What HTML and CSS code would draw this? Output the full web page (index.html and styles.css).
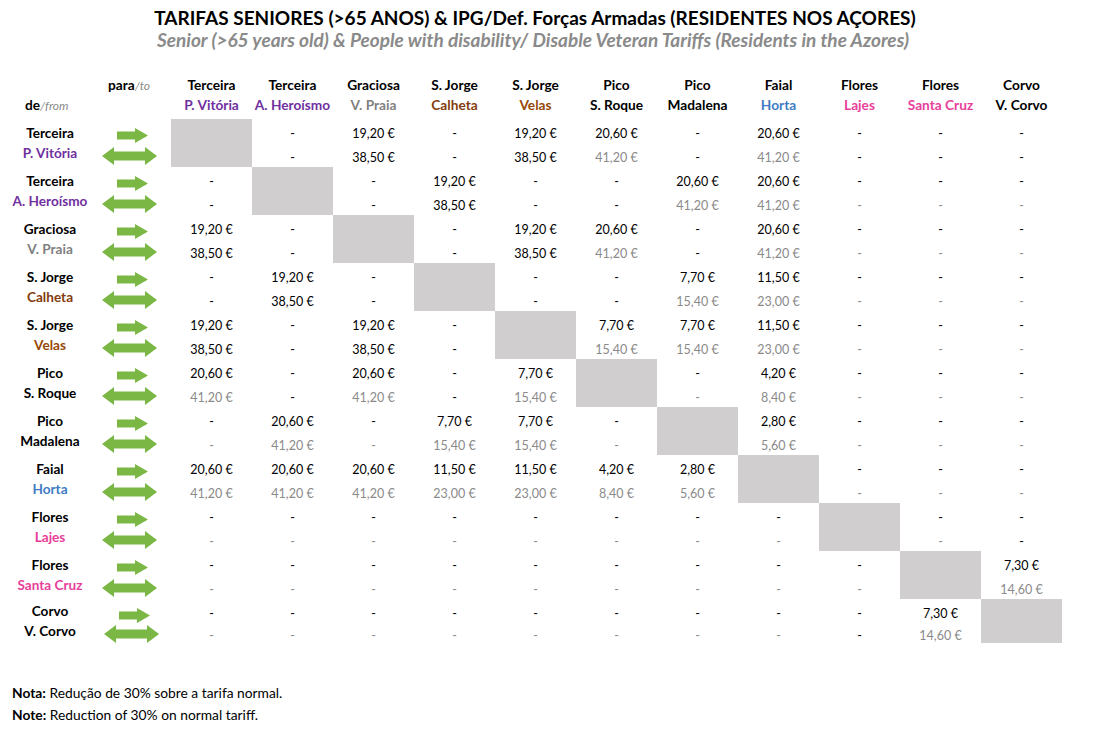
FILE: index.html
```html
<!DOCTYPE html>
<html lang="pt">
<head>
<meta charset="utf-8">
<title>Tarifas Seniores</title>
<link rel="stylesheet" href="styles.css">
</head>
<body>
<div class="page">
  <h1 class="title">TARIFAS SENIORES (&gt;65 ANOS) &amp; IPG/Def. Forças Armadas (RESIDENTES NOS AÇORES)</h1>
  <h2 class="subtitle">Senior (&gt;65 years old) &amp; People with disability/ Disable Veteran Tariffs (Residents in the Azores)</h2>

  <div class="row head">
    <div class="hl"><span class="blank"></span><span class="defrom"><b>de</b><i>/from</i></span></div>
    <div class="hp"><span><b>para</b><i>/to</i></span></div>
    <div class="hc"><span>Terceira</span><span class="pu">P. Vitória</span></div>
    <div class="hc"><span>Terceira</span><span class="pu">A. Heroísmo</span></div>
    <div class="hc"><span>Graciosa</span><span class="gy">V. Praia</span></div>
    <div class="hc"><span>S. Jorge</span><span class="br">Calheta</span></div>
    <div class="hc"><span>S. Jorge</span><span class="br2">Velas</span></div>
    <div class="hc"><span>Pico</span><span>S. Roque</span></div>
    <div class="hc"><span>Pico</span><span>Madalena</span></div>
    <div class="hc"><span>Faial</span><span class="bl">Horta</span></div>
    <div class="hc"><span>Flores</span><span class="pk">Lajes</span></div>
    <div class="hc"><span>Flores</span><span class="pk">Santa Cruz</span></div>
    <div class="hc"><span>Corvo</span><span>V. Corvo</span></div>
  </div>

  <div class="table">
    <!-- Terceira P. Vitória -->
    <div class="row grp">
      <div class="lbl"><span>Terceira</span><span class="pu">P. Vitória</span></div>
      <div class="arr"><svg width="71" height="48" viewBox="0 0 71 48"><path class="ar" d="M17 12.5H35V9L48 16.5L35 24V20.5H17Z"/><path class="ar" d="M2 37L14 28V32.5H45V28L57 37L45 46V41.5H14V46Z"/></svg></div>
      <div class="c x"></div>
      <div class="c"><span>-</span><span>-</span></div>
      <div class="c"><span>19,20 €</span><span>38,50 €</span></div>
      <div class="c"><span>-</span><span>-</span></div>
      <div class="c"><span>19,20 €</span><span>38,50 €</span></div>
      <div class="c"><span>20,60 €</span><span class="g">41,20 €</span></div>
      <div class="c"><span>-</span><span>-</span></div>
      <div class="c"><span>20,60 €</span><span class="g">41,20 €</span></div>
      <div class="c"><span>-</span><span>-</span></div>
      <div class="c"><span>-</span><span>-</span></div>
      <div class="c"><span>-</span><span>-</span></div>
    </div>
    <!-- Terceira A. Heroísmo -->
    <div class="row grp">
      <div class="lbl"><span>Terceira</span><span class="pu">A. Heroísmo</span></div>
      <div class="arr"><svg width="71" height="48" viewBox="0 0 71 48"><path class="ar" d="M17 12.5H35V9L48 16.5L35 24V20.5H17Z"/><path class="ar" d="M2 37L14 28V32.5H45V28L57 37L45 46V41.5H14V46Z"/></svg></div>
      <div class="c"><span>-</span><span>-</span></div>
      <div class="c x"></div>
      <div class="c"><span>-</span><span>-</span></div>
      <div class="c"><span>19,20 €</span><span>38,50 €</span></div>
      <div class="c"><span>-</span><span>-</span></div>
      <div class="c"><span>-</span><span>-</span></div>
      <div class="c"><span>20,60 €</span><span class="g">41,20 €</span></div>
      <div class="c"><span>20,60 €</span><span class="g">41,20 €</span></div>
      <div class="c"><span>-</span><span class="g">-</span></div>
      <div class="c"><span>-</span><span class="g">-</span></div>
      <div class="c"><span>-</span><span class="g">-</span></div>
    </div>
    <!-- Graciosa V. Praia -->
    <div class="row grp">
      <div class="lbl"><span>Graciosa</span><span class="gy">V. Praia</span></div>
      <div class="arr"><svg width="71" height="48" viewBox="0 0 71 48"><path class="ar" d="M17 12.5H35V9L48 16.5L35 24V20.5H17Z"/><path class="ar" d="M2 37L14 28V32.5H45V28L57 37L45 46V41.5H14V46Z"/></svg></div>
      <div class="c"><span>19,20 €</span><span>38,50 €</span></div>
      <div class="c"><span>-</span><span>-</span></div>
      <div class="c x"></div>
      <div class="c"><span>-</span><span>-</span></div>
      <div class="c"><span>19,20 €</span><span>38,50 €</span></div>
      <div class="c"><span>20,60 €</span><span class="g">41,20 €</span></div>
      <div class="c"><span>-</span><span>-</span></div>
      <div class="c"><span>20,60 €</span><span class="g">41,20 €</span></div>
      <div class="c"><span>-</span><span class="g">-</span></div>
      <div class="c"><span>-</span><span class="g">-</span></div>
      <div class="c"><span>-</span><span class="g">-</span></div>
    </div>
    <!-- S. Jorge Calheta -->
    <div class="row grp">
      <div class="lbl"><span>S. Jorge</span><span class="br">Calheta</span></div>
      <div class="arr"><svg width="71" height="48" viewBox="0 0 71 48"><path class="ar" d="M17 12.5H35V9L48 16.5L35 24V20.5H17Z"/><path class="ar" d="M2 37L14 28V32.5H45V28L57 37L45 46V41.5H14V46Z"/></svg></div>
      <div class="c"><span>-</span><span>-</span></div>
      <div class="c"><span>19,20 €</span><span>38,50 €</span></div>
      <div class="c"><span>-</span><span>-</span></div>
      <div class="c x"></div>
      <div class="c"><span>-</span><span>-</span></div>
      <div class="c"><span>-</span><span>-</span></div>
      <div class="c"><span>7,70 €</span><span class="g">15,40 €</span></div>
      <div class="c"><span>11,50 €</span><span class="g">23,00 €</span></div>
      <div class="c"><span>-</span><span class="g">-</span></div>
      <div class="c"><span>-</span><span class="g">-</span></div>
      <div class="c"><span>-</span><span class="g">-</span></div>
    </div>
    <!-- S. Jorge Velas -->
    <div class="row grp">
      <div class="lbl"><span>S. Jorge</span><span class="br2">Velas</span></div>
      <div class="arr"><svg width="71" height="48" viewBox="0 0 71 48"><path class="ar" d="M17 12.5H35V9L48 16.5L35 24V20.5H17Z"/><path class="ar" d="M2 37L14 28V32.5H45V28L57 37L45 46V41.5H14V46Z"/></svg></div>
      <div class="c"><span>19,20 €</span><span>38,50 €</span></div>
      <div class="c"><span>-</span><span>-</span></div>
      <div class="c"><span>19,20 €</span><span>38,50 €</span></div>
      <div class="c"><span>-</span><span>-</span></div>
      <div class="c x"></div>
      <div class="c"><span>7,70 €</span><span class="g">15,40 €</span></div>
      <div class="c"><span>7,70 €</span><span class="g">15,40 €</span></div>
      <div class="c"><span>11,50 €</span><span class="g">23,00 €</span></div>
      <div class="c"><span>-</span><span class="g">-</span></div>
      <div class="c"><span>-</span><span class="g">-</span></div>
      <div class="c"><span>-</span><span class="g">-</span></div>
    </div>
    <!-- Pico S. Roque -->
    <div class="row grp">
      <div class="lbl"><span>Pico</span><span>S. Roque</span></div>
      <div class="arr"><svg width="71" height="48" viewBox="0 0 71 48"><path class="ar" d="M17 12.5H35V9L48 16.5L35 24V20.5H17Z"/><path class="ar" d="M2 37L14 28V32.5H45V28L57 37L45 46V41.5H14V46Z"/></svg></div>
      <div class="c"><span>20,60 €</span><span class="g">41,20 €</span></div>
      <div class="c"><span>-</span><span>-</span></div>
      <div class="c"><span>20,60 €</span><span class="g">41,20 €</span></div>
      <div class="c"><span>-</span><span>-</span></div>
      <div class="c"><span>7,70 €</span><span class="g">15,40 €</span></div>
      <div class="c x"></div>
      <div class="c"><span>-</span><span class="g">-</span></div>
      <div class="c"><span>4,20 €</span><span class="g">8,40 €</span></div>
      <div class="c"><span>-</span><span class="g">-</span></div>
      <div class="c"><span>-</span><span class="g">-</span></div>
      <div class="c"><span>-</span><span class="g">-</span></div>
    </div>
    <!-- Pico Madalena -->
    <div class="row grp">
      <div class="lbl"><span>Pico</span><span>Madalena</span></div>
      <div class="arr"><svg width="71" height="48" viewBox="0 0 71 48"><path class="ar" d="M17 12.5H35V9L48 16.5L35 24V20.5H17Z"/><path class="ar" d="M2 37L14 28V32.5H45V28L57 37L45 46V41.5H14V46Z"/></svg></div>
      <div class="c"><span>-</span><span class="g">-</span></div>
      <div class="c"><span>20,60 €</span><span class="g">41,20 €</span></div>
      <div class="c"><span>-</span><span class="g">-</span></div>
      <div class="c"><span>7,70 €</span><span class="g">15,40 €</span></div>
      <div class="c"><span>7,70 €</span><span class="g">15,40 €</span></div>
      <div class="c"><span>-</span><span class="g">-</span></div>
      <div class="c x"></div>
      <div class="c"><span>2,80 €</span><span class="g">5,60 €</span></div>
      <div class="c"><span>-</span><span class="g">-</span></div>
      <div class="c"><span>-</span><span class="g">-</span></div>
      <div class="c"><span>-</span><span class="g">-</span></div>
    </div>
    <!-- Faial Horta -->
    <div class="row grp">
      <div class="lbl"><span>Faial</span><span class="bl">Horta</span></div>
      <div class="arr"><svg width="71" height="48" viewBox="0 0 71 48"><path class="ar" d="M17 12.5H35V9L48 16.5L35 24V20.5H17Z"/><path class="ar" d="M2 37L14 28V32.5H45V28L57 37L45 46V41.5H14V46Z"/></svg></div>
      <div class="c"><span>20,60 €</span><span class="g">41,20 €</span></div>
      <div class="c"><span>20,60 €</span><span class="g">41,20 €</span></div>
      <div class="c"><span>20,60 €</span><span class="g">41,20 €</span></div>
      <div class="c"><span>11,50 €</span><span class="g">23,00 €</span></div>
      <div class="c"><span>11,50 €</span><span class="g">23,00 €</span></div>
      <div class="c"><span>4,20 €</span><span class="g">8,40 €</span></div>
      <div class="c"><span>2,80 €</span><span class="g">5,60 €</span></div>
      <div class="c x"></div>
      <div class="c"><span>-</span><span class="g">-</span></div>
      <div class="c"><span>-</span><span class="g">-</span></div>
      <div class="c"><span>-</span><span class="g">-</span></div>
    </div>
    <!-- Flores Lajes -->
    <div class="row grp">
      <div class="lbl"><span>Flores</span><span class="pk">Lajes</span></div>
      <div class="arr"><svg width="71" height="48" viewBox="0 0 71 48"><path class="ar" d="M17 12.5H35V9L48 16.5L35 24V20.5H17Z"/><path class="ar" d="M2 37L14 28V32.5H45V28L57 37L45 46V41.5H14V46Z"/></svg></div>
      <div class="c"><span>-</span><span class="g">-</span></div>
      <div class="c"><span>-</span><span class="g">-</span></div>
      <div class="c"><span>-</span><span class="g">-</span></div>
      <div class="c"><span>-</span><span class="g">-</span></div>
      <div class="c"><span>-</span><span class="g">-</span></div>
      <div class="c"><span>-</span><span class="g">-</span></div>
      <div class="c"><span>-</span><span class="g">-</span></div>
      <div class="c"><span>-</span><span class="g">-</span></div>
      <div class="c x"></div>
      <div class="c"><span>-</span><span class="g">-</span></div>
      <div class="c"><span>-</span><span>-</span></div>
    </div>
    <!-- Flores Santa Cruz -->
    <div class="row grp">
      <div class="lbl"><span>Flores</span><span class="pk">Santa Cruz</span></div>
      <div class="arr"><svg width="71" height="48" viewBox="0 0 71 48"><path class="ar" d="M17 12.5H35V9L48 16.5L35 24V20.5H17Z"/><path class="ar" d="M2 37L14 28V32.5H45V28L57 37L45 46V41.5H14V46Z"/></svg></div>
      <div class="c"><span>-</span><span class="g">-</span></div>
      <div class="c"><span>-</span><span class="g">-</span></div>
      <div class="c"><span>-</span><span class="g">-</span></div>
      <div class="c"><span>-</span><span class="g">-</span></div>
      <div class="c"><span>-</span><span class="g">-</span></div>
      <div class="c"><span>-</span><span class="g">-</span></div>
      <div class="c"><span>-</span><span class="g">-</span></div>
      <div class="c"><span>-</span><span class="g">-</span></div>
      <div class="c"><span>-</span><span class="g">-</span></div>
      <div class="c x"></div>
      <div class="c"><span>7,30 €</span><span class="g">14,60 €</span></div>
    </div>
    <!-- Corvo V. Corvo -->
    <div class="row grp last">
      <div class="lbl"><span>Corvo</span><span>V. Corvo</span></div>
      <div class="arr"><svg width="71" height="44" viewBox="0 0 71 44"><path class="ar" d="M19 12.5H37V9L50 16.5L37 24V20.5H19Z"/><path class="ar" d="M4 35L16 26V30.5H47V26L59 35L47 44V39.5H16V44Z"/></svg></div>
      <div class="c"><span>-</span><span class="g">-</span></div>
      <div class="c"><span>-</span><span class="g">-</span></div>
      <div class="c"><span>-</span><span class="g">-</span></div>
      <div class="c"><span>-</span><span class="g">-</span></div>
      <div class="c"><span>-</span><span class="g">-</span></div>
      <div class="c"><span>-</span><span class="g">-</span></div>
      <div class="c"><span>-</span><span class="g">-</span></div>
      <div class="c"><span>-</span><span class="g">-</span></div>
      <div class="c"><span>-</span><span>-</span></div>
      <div class="c"><span>7,30 €</span><span class="g">14,60 €</span></div>
      <div class="c x"></div>
    </div>
  </div>

  <div class="foot">
    <p><b>Nota:</b> Redução de 30% sobre a tarifa normal.</p>
    <p><b>Note:</b> Reduction of 30% on normal tariff.</p>
  </div>
</div>
</body>
</html>
```

FILE: styles.css
```css
* { box-sizing: border-box; }
body {
  margin: 0;
  background: #fff;
  color: #000;
  font-family: Lato, "Open Sans", "Liberation Sans", sans-serif;
}
.page { width: 1096px; }

.title {
  margin: 0;
  width: 1070px;
  padding-top: 7px;
  text-align: center;
  font-size: 19px;
  line-height: 22px;
  font-weight: 700;
}
.subtitle {
  margin: 0;
  width: 1066px;
  text-align: center;
  font-size: 19px;
  line-height: 22px;
  font-weight: 700;
  font-style: italic;
  color: #8a8a8a;
}

.row {
  display: grid;
  grid-template-columns: 100px 71px repeat(11, 81px);
}

.head {
  margin-top: 24px;
  height: 40px;
  font-size: 13.7px;
  line-height: 20px;
}
.head span { display: block; height: 20px; }
.hl { padding-left: 25px; }
.hp { padding-left: 8px; }
.hc { text-align: center; font-weight: 700; }
.head b { font-weight: 700; }
.head i { color: #8a8a8a; font-size: 12px; }

.table { margin-top: 4px; }
.grp { height: 48px; grid-template-rows: 48px; }
.last { height: 44px; grid-template-rows: 44px; }

.lbl {
  display: flex;
  flex-direction: column;
  justify-content: center;
  align-items: center;
  font-size: 13.6px;
  line-height: 20px;
  font-weight: 700;
}
.arr svg { display: block; }
.ar { fill: #7ab744; }

.c {
  text-align: center;
  padding-top: 3px;
  font-size: 12.5px;
}
.c span { display: block; height: 24px; line-height: 24px; }
.last .c span:last-child { height: 20px; line-height: 20px; }
.c .g { color: #8a8a8a; }
.x { background: #d0cece; padding: 0; }

.pu { color: #7030a0; }
.gy { color: #808080; }
.br { color: #843c0c; }
.br2 { color: #974706; }
.bl { color: #3e7cc4; }
.pk { color: #e83e9a; }

.foot {
  margin-top: 39px;
  padding-left: 12px;
  font-size: 13.8px;
  line-height: 22px;
}
.foot p { margin: 0; }
.foot b { font-weight: 700; }
```
